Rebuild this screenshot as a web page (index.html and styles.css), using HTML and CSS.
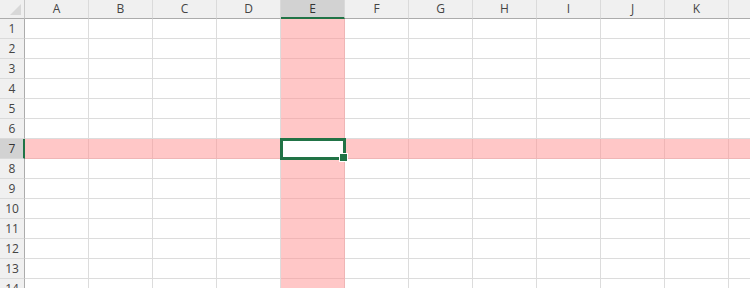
FILE: index.html
```html
<!DOCTYPE html>
<html lang="en">
<head>
  <meta charset="UTF-8" />
  <title>Sheet1</title>
  <link rel="stylesheet" href="styles.css">
</head>
<body>
  <div class="sheet">
    <div class="row head">
      <div class="corner"></div>
      <div class="ch">A</div><div class="ch">B</div><div class="ch">C</div><div class="ch">D</div>
      <div class="ch sel">E</div>
      <div class="ch">F</div><div class="ch">G</div><div class="ch">H</div><div class="ch">I</div>
      <div class="ch">J</div><div class="ch">K</div><div class="ch"></div>
    </div>

    <div class="row"><div class="rh">1</div><div class="c"></div><div class="c"></div><div class="c"></div><div class="c"></div><div class="c hl"></div><div class="c"></div><div class="c"></div><div class="c"></div><div class="c"></div><div class="c"></div><div class="c"></div><div class="c"></div></div>
    <div class="row"><div class="rh">2</div><div class="c"></div><div class="c"></div><div class="c"></div><div class="c"></div><div class="c hl"></div><div class="c"></div><div class="c"></div><div class="c"></div><div class="c"></div><div class="c"></div><div class="c"></div><div class="c"></div></div>
    <div class="row"><div class="rh">3</div><div class="c"></div><div class="c"></div><div class="c"></div><div class="c"></div><div class="c hl"></div><div class="c"></div><div class="c"></div><div class="c"></div><div class="c"></div><div class="c"></div><div class="c"></div><div class="c"></div></div>
    <div class="row"><div class="rh">4</div><div class="c"></div><div class="c"></div><div class="c"></div><div class="c"></div><div class="c hl"></div><div class="c"></div><div class="c"></div><div class="c"></div><div class="c"></div><div class="c"></div><div class="c"></div><div class="c"></div></div>
    <div class="row"><div class="rh">5</div><div class="c"></div><div class="c"></div><div class="c"></div><div class="c"></div><div class="c hl"></div><div class="c"></div><div class="c"></div><div class="c"></div><div class="c"></div><div class="c"></div><div class="c"></div><div class="c"></div></div>
    <div class="row"><div class="rh">6</div><div class="c"></div><div class="c"></div><div class="c"></div><div class="c"></div><div class="c hl"></div><div class="c"></div><div class="c"></div><div class="c"></div><div class="c"></div><div class="c"></div><div class="c"></div><div class="c"></div></div>
    <div class="row"><div class="rh sel">7</div><div class="c hl"></div><div class="c hl"></div><div class="c hl"></div><div class="c hl"></div><div class="c active"></div><div class="c hl"></div><div class="c hl"></div><div class="c hl"></div><div class="c hl"></div><div class="c hl"></div><div class="c hl"></div><div class="c hl"></div></div>
    <div class="row"><div class="rh">8</div><div class="c"></div><div class="c"></div><div class="c"></div><div class="c"></div><div class="c hl"></div><div class="c"></div><div class="c"></div><div class="c"></div><div class="c"></div><div class="c"></div><div class="c"></div><div class="c"></div></div>
    <div class="row"><div class="rh">9</div><div class="c"></div><div class="c"></div><div class="c"></div><div class="c"></div><div class="c hl"></div><div class="c"></div><div class="c"></div><div class="c"></div><div class="c"></div><div class="c"></div><div class="c"></div><div class="c"></div></div>
    <div class="row"><div class="rh">10</div><div class="c"></div><div class="c"></div><div class="c"></div><div class="c"></div><div class="c hl"></div><div class="c"></div><div class="c"></div><div class="c"></div><div class="c"></div><div class="c"></div><div class="c"></div><div class="c"></div></div>
    <div class="row"><div class="rh">11</div><div class="c"></div><div class="c"></div><div class="c"></div><div class="c"></div><div class="c hl"></div><div class="c"></div><div class="c"></div><div class="c"></div><div class="c"></div><div class="c"></div><div class="c"></div><div class="c"></div></div>
    <div class="row"><div class="rh">12</div><div class="c"></div><div class="c"></div><div class="c"></div><div class="c"></div><div class="c hl"></div><div class="c"></div><div class="c"></div><div class="c"></div><div class="c"></div><div class="c"></div><div class="c"></div><div class="c"></div></div>
    <div class="row"><div class="rh">13</div><div class="c"></div><div class="c"></div><div class="c"></div><div class="c"></div><div class="c hl"></div><div class="c"></div><div class="c"></div><div class="c"></div><div class="c"></div><div class="c"></div><div class="c"></div><div class="c"></div></div>
    <div class="row"><div class="rh">14</div><div class="c"></div><div class="c"></div><div class="c"></div><div class="c"></div><div class="c hl"></div><div class="c"></div><div class="c"></div><div class="c"></div><div class="c"></div><div class="c"></div><div class="c"></div><div class="c"></div></div>
  </div>
</body>
</html>
```

FILE: styles.css
```css
* {
  margin: 0;
  padding: 0;
  box-sizing: border-box;
}

html, body {
  width: 100%;
  height: 100%;
  overflow: hidden;
  background: #fff;
  font-family: 'Open Sans', 'Noto Sans', sans-serif;
}

.sheet {
  display: flex;
  flex-direction: column;
}

.row {
  display: flex;
  height: 20px;
  flex-shrink: 0;
}

.row.head {
  height: 19px;
}

/* Headers */
.corner {
  position: relative;
  width: 25px;
  flex-shrink: 0;
  background: #f0f0f0;
  border-right: 1px solid #c8c8c8;
  border-bottom: 1px solid #acacac;
}

.corner::after {
  content: "";
  position: absolute;
  right: 3px;
  bottom: 3px;
  width: 0;
  height: 0;
  border-left: 11px solid transparent;
  border-bottom: 11px solid #d8d8d8;
}

.ch {
  width: 64px;
  flex-shrink: 0;
  background: #f0f0f0;
  border-right: 1px solid #dadada;
  border-bottom: 1px solid #acacac;
  color: #444;
  font-size: 12px;
  line-height: 18px;
  text-align: center;
}

.ch.sel {
  background: #d2d2d2;
  border-bottom: 2px solid #217346;
  line-height: 17px;
  color: #333;
}

.rh {
  width: 25px;
  flex-shrink: 0;
  background: #f0f0f0;
  border-right: 1px solid #acacac;
  border-bottom: 1px solid #dadada;
  color: #444;
  font-size: 12px;
  line-height: 19px;
  text-align: center;
}

.rh.sel {
  background: #d2d2d2;
  border-right: 2px solid #217346;
  padding-left: 1px;
  color: #333;
}

/* Cells */
.c {
  width: 64px;
  flex-shrink: 0;
  border-right: 1px solid #dcdcdc;
  border-bottom: 1px solid #dcdcdc;
}

.c.hl {
  background: #ffc7c7;
  border-color: #efb6b6;
}

.c.active {
  position: relative;
  background: #fff;
}

.c.active::before {
  content: "";
  position: absolute;
  top: -1px;
  left: -1px;
  right: -2px;
  bottom: -2px;
  border: 3px solid #217346;
}

.c.active::after {
  content: "";
  position: absolute;
  right: -4px;
  bottom: -4px;
  width: 7px;
  height: 7px;
  background: #217346;
  border: 1px solid #fff;
}
```
